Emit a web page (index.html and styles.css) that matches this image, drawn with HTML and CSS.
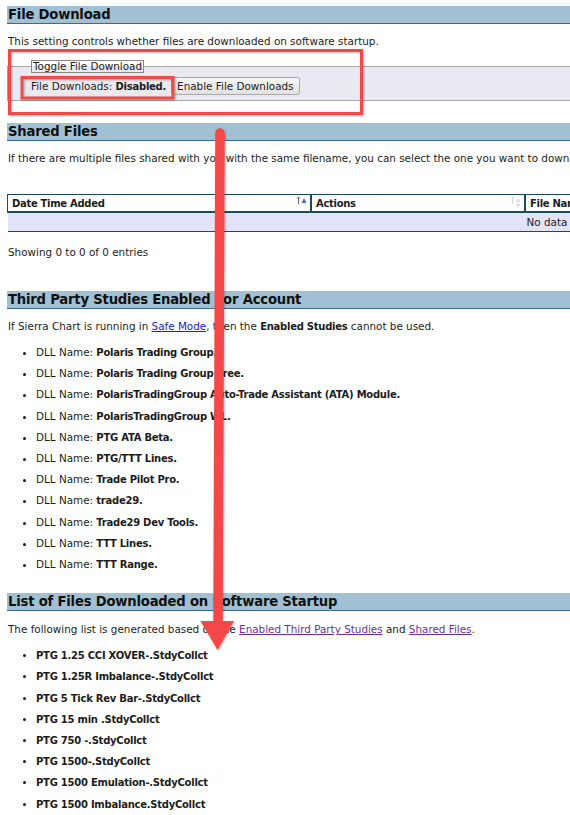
FILE: index.html
```html
<!DOCTYPE html>
<html lang="en">
<head>
    <meta charset="UTF-8">
    <title>Account Files</title>
    <link rel="stylesheet" href="styles.css">
</head>
<body>
    <div class="page">
        <h2 class="section-title first">File Download</h2>
        <p class="note">This setting controls whether files are downloaded on software startup.</p>

        <fieldset class="toggle-box">
            <legend>Toggle File Download</legend>
            <div class="toggle-row">
                <span>File Downloads: <b>Disabled.</b></span>
                <button class="btn">Enable File Downloads</button>
            </div>
        </fieldset>

        <h2 class="section-title">Shared Files</h2>
        <p class="note">If there are multiple files shared with you with the same filename, you can select the one you want to download by enabling it in the Actions column.</p>

        <table class="data-table">
            <thead>
                <tr>
                    <th class="col-date">Date Time Added
                        <svg class="sort" width="12" height="9" viewBox="0 0 12 9">
                            <path d="M2.5 8V1M1 2.5l1.5-1.5 1.5 1.5" stroke="#556" stroke-width="0.9" fill="none"/>
                            <path d="M5.5 7h5l-2.5-5z" fill="#5566cc"/>
                        </svg>
                    </th>
                    <th class="col-actions">Actions
                        <svg class="sort" width="12" height="13" viewBox="0 0 12 13">
                            <path d="M2.5 8V1M1 2.5l1.5-1.5 1.5 1.5" stroke="#ccd" stroke-width="0.9" fill="none"/>
                            <path d="M5.5 6h5l-2.5-4zM5.5 8h5l-2.5 4z" fill="#dde"/>
                        </svg>
                    </th>
                    <th class="col-name">File Name</th>
                    <th class="col-size">File Size</th>
                </tr>
            </thead>
            <tbody>
                <tr>
                    <td colspan="4" class="empty">No data available in table</td>
                </tr>
            </tbody>
        </table>
        <p class="note info">Showing 0 to 0 of 0 entries</p>

        <h2 class="section-title spaced">Third Party Studies Enabled For Account</h2>
        <p class="note">If Sierra Chart is running in <a href="#" class="link">Safe Mode</a>, then the <b>Enabled Studies</b> cannot be used.</p>
        <ul class="study-list">
            <li>DLL Name: <b>Polaris Trading Group.</b></li>
            <li>DLL Name: <b>Polaris Trading Group Free.</b></li>
            <li>DLL Name: <b>PolarisTradingGroup Auto-Trade Assistant (ATA) Module.</b></li>
            <li>DLL Name: <b>PolarisTradingGroup WL.</b></li>
            <li>DLL Name: <b>PTG ATA Beta.</b></li>
            <li>DLL Name: <b>PTG/TTT Lines.</b></li>
            <li>DLL Name: <b>Trade Pilot Pro.</b></li>
            <li>DLL Name: <b>trade29.</b></li>
            <li>DLL Name: <b>Trade29 Dev Tools.</b></li>
            <li>DLL Name: <b>TTT Lines.</b></li>
            <li>DLL Name: <b>TTT Range.</b></li>
        </ul>

        <h2 class="section-title tight">List of Files Downloaded on Software Startup</h2>
        <p class="note lead">The following list is generated based on the <a href="#" class="link visited">Enabled Third Party Studies</a> and <a href="#" class="link visited">Shared Files</a>.</p>
        <ul class="study-list files">
            <li>PTG 1.25 CCI XOVER-.StdyCollct</li>
            <li>PTG 1.25R Imbalance-.StdyCollct</li>
            <li>PTG 5 Tick Rev Bar-.StdyCollct</li>
            <li>PTG 15 min .StdyCollct</li>
            <li>PTG 750 -.StdyCollct</li>
            <li>PTG 1500-.StdyCollct</li>
            <li>PTG 1500 Emulation-.StdyCollct</li>
            <li>PTG 1500 Imbalance.StdyCollct</li>
        </ul>
    </div>

    <!-- red markup drawn over the page -->
    <svg class="markup" width="570" height="815" viewBox="0 0 570 815">
        <defs>
            <filter id="soft" x="-20%" y="-20%" width="140%" height="140%">
                <feDropShadow dx="1" dy="1" stdDeviation="1.2" flood-color="#000" flood-opacity="0.3"/>
            </filter>
        </defs>
        <g fill="none" stroke="#f04848" stroke-width="3" filter="url(#soft)">
            <rect x="9.5" y="50.5" width="352" height="63"/>
            <rect x="22" y="77.5" width="151" height="20.5"/>
        </g>
        <g fill="#f44646" filter="url(#soft)">
            <path d="M220 133 L218 624" stroke="#f44646" stroke-width="9.5" stroke-linecap="round"/>
            <path d="M200.5 621 L234 621 L217.5 650 Z"/>
        </g>
    </svg>
</body>
</html>
```

FILE: styles.css
```css
html, body {
    margin: 0;
    padding: 0;
    overflow: hidden;
    background: white;
}

body {
    font-family: "DejaVu Sans", Verdana, sans-serif;
    font-size: 10.4px;
    color: #1c1c1c;
    position: relative;
}

b {
    font-size: 10px;
    letter-spacing: -0.25px;
}

.page {
    width: 1200px;
    padding: 0 0 0 7px;
}

.section-title {
    margin: 22px 0 0;
    height: 17px;
    line-height: 18px;
    padding-left: 1px;
    background: #a2c0d3;
    border-bottom: 1px solid #3d6a8e;
    font-size: 13.2px;
    letter-spacing: -0.2px;
    font-weight: bold;
    color: #101010;
}

.section-title.first {
    margin-top: 6px;
}

.section-title.spaced {
    margin-top: 32px;
}

.section-title.tight {
    margin-top: 18px;
}

.note {
    margin: 10px 0 0;
    padding-left: 1px;
    line-height: 14px;
    white-space: nowrap;
}

.note.lead {
    margin-top: 11px;
}

.link {
    color: #2020d0;
}

.link.visited {
    color: #6a2fa5;
}

/* toggle form */
.toggle-box {
    margin: 12px 0 0;
    padding: 4px 0 5px 23px;
    border: 1px solid #a8a8a8;
    background: #e9e9f1;
}

.toggle-box legend {
    padding: 0 1px;
    border: 1px solid #888;
    line-height: 11px;
}

.toggle-row {
    display: flex;
    align-items: center;
    gap: 5px;
    height: 18px;
}

.btn {
    font-family: inherit;
    font-size: 10.4px;
    color: #1c1c1c;
    height: 18px;
    padding: 0 5px;
    background: linear-gradient(#f6f6f6, #e2e2e2);
    border: 1px solid #a9a9a9;
    border-radius: 2px;
}

/* shared files table */
.data-table {
    margin-top: 29px;
    border-collapse: collapse;
    width: 1172px;
}

.data-table th {
    position: relative;
    height: 16px;
    padding: 0 4px;
    text-align: left;
    font-size: 10px;
    letter-spacing: -0.3px;
    font-weight: bold;
    border-top: 1px solid #1e4a58;
    border-left: 2px solid #1e4a58;
    border-bottom: 2px solid #1e4a58;
    background: white;
}

.data-table th:first-child {
    border-left-width: 1px;
}

.col-date { width: 294px; }
.col-actions { width: 204px; }
.col-name { width: 300px; }

.sort {
    position: absolute;
    right: 2px;
    top: 1px;
}

.data-table td {
    height: 18px;
    padding: 0 4px;
    background: #e2e2f8;
    border-bottom: 1px solid #1e4a58;
    text-align: center;
}

.info {
    margin-top: 13px;
}

/* lists */
.study-list {
    margin: 8px 0 0;
    padding-left: 29px;
    line-height: 21.2px;
}

.study-list.files {
    margin-top: 9px;
    font-size: 10px;
    letter-spacing: -0.25px;
    font-weight: bold;
}

/* annotation layer over the page */
.markup {
    position: absolute;
    top: 0;
    left: 0;
    pointer-events: none;
}
```
